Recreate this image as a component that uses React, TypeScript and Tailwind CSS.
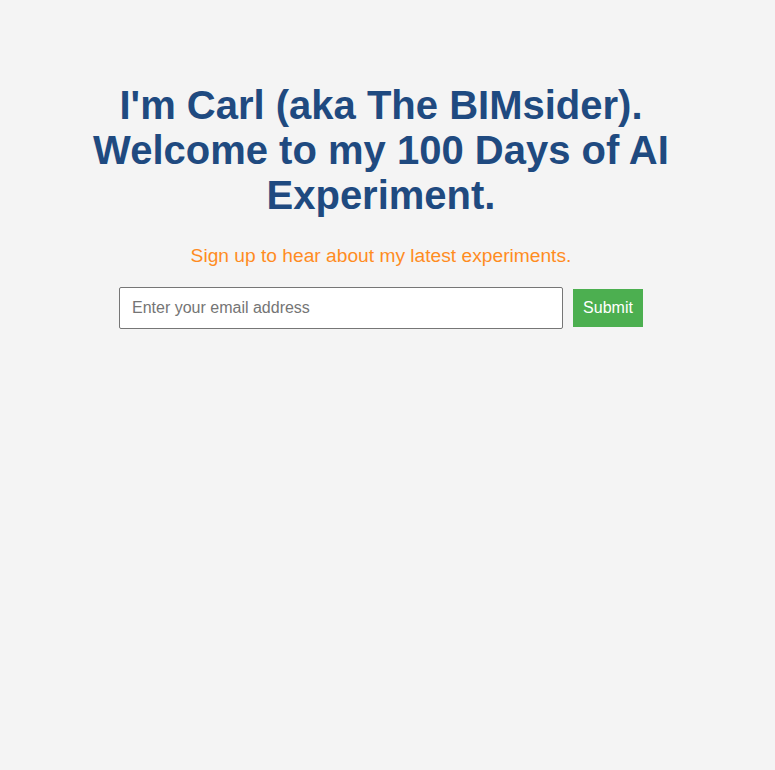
import React from 'react';

export default function App() {
  return (
    <div className="min-h-[770px] w-full bg-[#f4f4f4] font-['Liberation_Sans',Arial,sans-serif]">
      <div className="w-[762px] pt-[83px] text-center">
        <h1 className="mx-auto max-w-[600px] text-[40px] font-bold leading-[45px] text-[#1f4a80]">
          I'm Carl (aka The BIMsider). Welcome to my 100 Days of AI Experiment.
        </h1>
        <p className="mt-[27px] text-[19.2px] leading-[22px] text-[#ff8c1f]">
          Sign up to hear about my latest experiments.
        </p>
        <form className="mt-[20px] flex items-center justify-center gap-[10px]" onSubmit={(e) => e.preventDefault()}>
          <input
            type="email"
            placeholder="Enter your email address"
            className="h-[42px] w-[444px] rounded-[2px] border border-[#767676] bg-white px-[12px] text-[16px] text-[#333] placeholder:text-[#757575] outline-none"
          />
          <button type="submit" className="h-[38px] w-[70px] bg-[#4caf50] text-[16px] text-white">
            Submit
          </button>
        </form>
      </div>
    </div>
  );
}
